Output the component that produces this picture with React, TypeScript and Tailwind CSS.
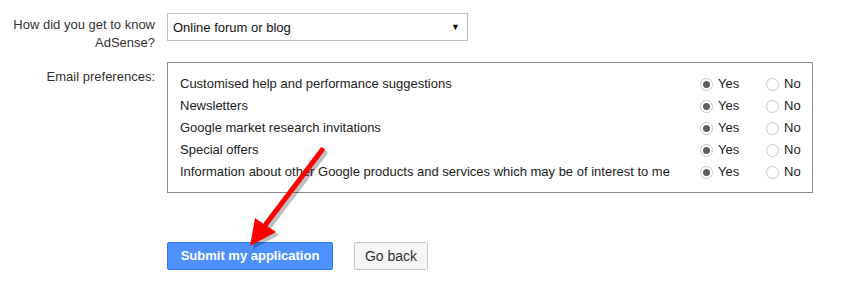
const ROWS = [
  "Customised help and performance suggestions",
  "Newsletters",
  "Google market research invitations",
  "Special offers",
  "Information about other Google products and services which may be of interest to me",
];

function Radio({ checked }: { checked?: boolean }) {
  return (
    <span className="inline-flex h-[13px] w-[13px] items-center justify-center rounded-full border border-[#c8c8c8] bg-white">
      {checked && <span className="h-[7px] w-[7px] rounded-full bg-[#606060]" />}
    </span>
  );
}

export default function App() {
  return (
    <main className="relative h-[281px] w-[854px] bg-white font-['Liberation_Sans',Arial,sans-serif] text-[13px] text-[#222]">
      <div className="flex flex-col pt-[13px]">
        <div className="flex gap-3">
          <label className="w-[155px] pt-[3px] text-right leading-[18px] text-[#333]">
            How did you get to know AdSense?
          </label>
          <div className="flex h-[28px] w-[301px] items-center justify-between border border-[#c0c0c0] pl-[5px] pr-[7px] pt-[1px] text-[13px] text-[#111]">
            <span>Online forum or blog</span>
            <span className="text-[9px]">▼</span>
          </div>
        </div>

        <div className="mt-[10px] flex gap-3">
          <label className="w-[155px] pt-[6px] text-right leading-[18px] text-[#333]">
            Email preferences:
          </label>
          <div className="flex h-[131px] w-[646px] flex-col border border-[#8c8c8c] pt-[10px] pl-3">
            {ROWS.map((r) => (
              <div key={r} className="flex h-[22px] items-center">
                <span className="w-[520px]">{r}</span>
                <div className="flex w-[66px] items-center gap-[5px]">
                  <Radio checked />
                  <span>Yes</span>
                </div>
                <div className="flex items-center gap-[5px]">
                  <Radio />
                  <span>No</span>
                </div>
              </div>
            ))}
          </div>
        </div>

        <div className="mt-[49px] flex gap-[21px] pl-[167px]">
          <button className="h-[28px] w-[166px] rounded-[2px] border border-[#3079ed] bg-[#4d90fe] font-bold text-white">
            Submit my application
          </button>
          <button className="h-[28px] w-[74px] rounded-[2px] border border-[#c6c6c6] bg-[#f5f5f5] text-[14px] text-[#333]">
            Go back
          </button>
        </div>
      </div>

      <svg className="pointer-events-none absolute inset-0" width="854" height="281">
        <g transform="translate(3,3)" fill="#000" opacity="0.25">
          <line x1="322" y1="150" x2="266" y2="224" stroke="#000" strokeWidth="5" strokeLinecap="round" />
          <polygon points="250,246 255,218 276,232" />
        </g>
        <line x1="322" y1="150" x2="266" y2="224" stroke="#f00" strokeWidth="5" strokeLinecap="round" />
        <polygon points="250,246 255,218 276,232" fill="#f00" />
      </svg>
    </main>
  );
}
